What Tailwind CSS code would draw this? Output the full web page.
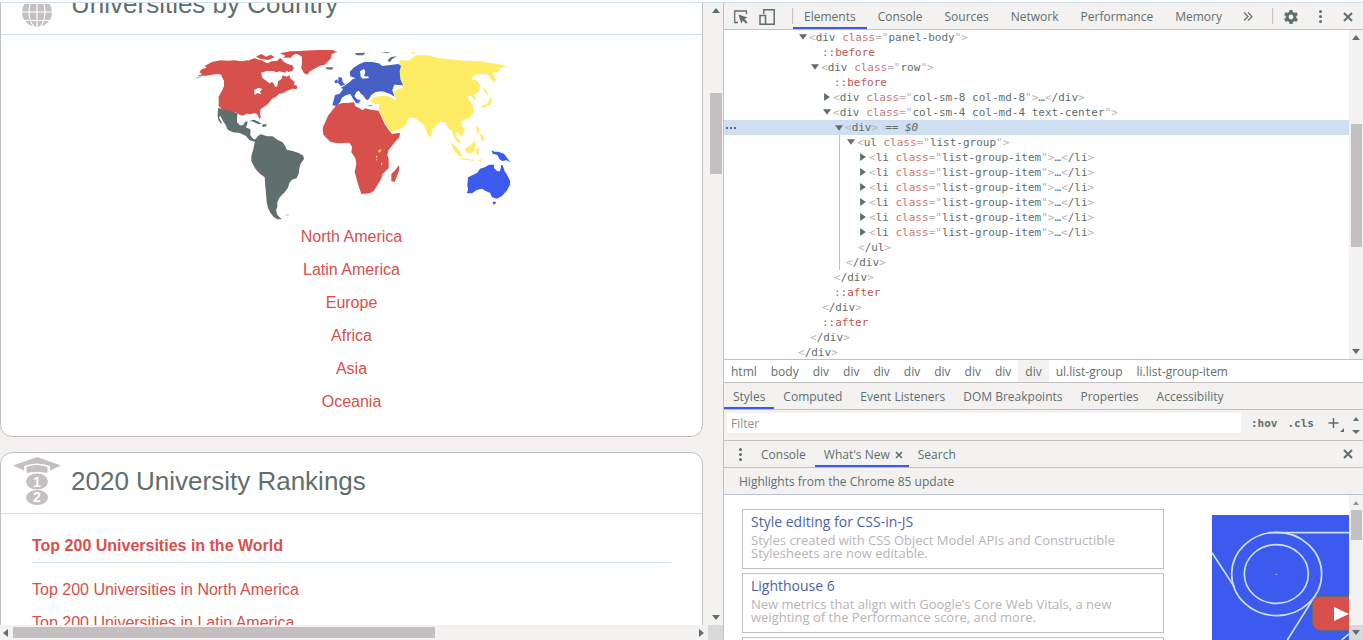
<!DOCTYPE html>
<html lang="en">
<head>
<meta charset="utf-8">
<title>Universities by Country</title>
<script src="https://cdn.jsdelivr.net/npm/@tailwindcss/browser@4"></script>
</head>
<body class="h-screen overflow-hidden bg-white text-[#5f6f6d]">
<div class="grid h-full grid-cols-[723fr_640fr] grid-rows-[minmax(0,1fr)] pt-[2px]">

  <!-- Page viewport -->
  <main class="flex min-w-0 flex-col border-t border-[#cddff1] bg-[#f3f2f1] font-['Liberation_Sans',Arial,sans-serif]">
    <div class="flex min-h-0 flex-1">
      <div class="min-w-0 flex-1 overflow-hidden pr-[5px]">
        <section class="-mt-[30px] rounded-xl border border-[#c4bfc1] bg-white pb-[18px]">
          <header class="flex h-[61px] items-center border-b border-[#cddff1] pl-5">
            <svg class="mt-4 size-8 shrink-0" viewBox="0 0 32 32" aria-hidden="true">
              <circle cx="16" cy="16" r="15" fill="#c4bfc1"/>
              <g fill="none" stroke="#fff" stroke-width="1.2"><path d="M16 0v32M0 16h32M3 7.500h26M3 24.500h26"/><ellipse cx="16" cy="16" rx="8" ry="15.500"/></g>
            </svg>
            <h2 class="mb-px ml-[18px] text-[26px] leading-8">Universities by Country</h2>
          </header>
          <svg class="mx-auto mt-[10px] h-[175px] w-[323px]" viewBox="30 15 969 525" role="img" aria-label="World map by region">
            <defs>
              <pattern id="hatch" width="9" height="9" patternUnits="userSpaceOnUse"><rect width="9" height="9" fill="#3d5aee"/><path d="M0 0l9 9M-2 7l4 4M7-2l4 4" stroke="#5f6f6d" stroke-width="2.800"/></pattern>
            </defs>
            <g fill="#d7504b">
              <path d="M52 108l14-6-8-5 8-10 14-4-6-5 22-12 26-5 20 1 22-1 20 3 18-3 14 6 16 2 18-4 14 5 10-6 18-2 8-8 8 6-4 12 12-4 6 6 16 2-2 12-14 2-6 8-18-4-12 4-16 4-8 10 4 12 14 4 6 14 6-4 2-14 10-6 4-12 12 4 8-4 4 10 12 10-2 8 10 4-2 10-14-2-14 6-14 8-12 2-10 10-10 4-12 16-14 10-8 6-2 12 2 14-4 3-6-14-8-4-12 4-12-2-12 6-8-2-12-8-18 0-16-6-10-4-8-9 0-28 10-18 6-14 0-16-6-10-2-8-12-2-16 2-18 3z"/>
              <path d="M204 62l20-8 14 6 14 2-4 8-24 4zM228 50l16-8 14 8 14-6 12 8-20 8-24-4zM300 40l30-6 36-1-10 6-16 6-8 8-22 0 6-6zM286 66l18-6 14 10 16 6 8 8-6 10-12 2-6-10-14-6zM310 138l22 0 4 10-18 0z"/>
              <path d="M340 37l26-5 50-2 42 0 14 6-16 6-4 14-18 18-16 4-14 8-14 8-8 10-10-4-8-16 2-16 0-18-10-6z"/>
            </g>
            <path d="M38 119l16-9 12-4-4 6zM464 35l8 3-8 2z" fill="#c4bfc1"/>
            <g fill="#fff"><path d="M222 151l14-8 10 4-6 8 4 8-12-4-8 6zM244 98l16-5 22 0 10 8-14 16-8 14-10-8-14-10z"/></g>
            <g fill="#5f6f6d">
              <path d="M114 204l14 4 18 3 27 9-2 14 0 12 8 10 10 0 6-10 8-2-2 12-4 6 14 6 0 18 8 10 10 4-6 5-14-4-12-14-18-8-20-2-16-8-6-14-8-12-8-16-4 6 8 14 0 6-10-12-2-14zM208 243l14-4 14 6 10 8-14-2-12-6zM246 254l12-2 2 6-12 4z"/>
              <path d="M226 298l8-10 8-5 20 6 16 0 14 10 16 8 8 12 4 10 18 4 18 6 14 8 2 10-10 14-4 14-2 16-6 14-14 4-8 10-4 14-10 14-12 12-6 8-4 10 0 14-4 10 4 14 10 10 4 3-14 0-10-6-10-12-8-16-4-18-2-24-2-24-2-26-16-12-12-14-12-22 0-16 6-20z"/>
              <path d="M316 522l10 0 0 6-8 0z" fill="#cddff1"/>
            </g>
            <g transform="translate(480)">
              <path fill="#d7504b" d="M-10 194l18-5 14 0 20-2 4 12 10 4 12 8 8-6 16 4 24 3 6 14 12 26 14 20 8 10 24-4-2 14-16 18-16 20-4 14 4 14 0 26-18 18-6 18-10 16-10 16-12 8-26 2-10-30-10-36 5-24-3-18-12-17 2-17-8-12-34 2-22-4-22-22-2-20 16-37zM176 376l2 12-6 18-8 20-10-2 0-22 14-14z"/>
              <path d="M122 327l-8 6 4 5 5-4z" fill="#ffec65"/>
              <path d="M110 347v6M110 357v4M125 368v8" stroke="#ffec65" stroke-width="3"/>
              <g fill="#ffec65">
                <path d="M180 60l24 2 12-8 14-8 36 0 26 8 40 4 42 4 40 2 36 4 22 4 28 7-20 6-4 10-18 4 10 20-4 8-12-10-8-14-20-2-20 4-10 14 16 2 10 14-2 18-12 10-6 2 8 12-4 4-10-12-12-2 8 16 10 14 2 20-12 16-18 8-10 4 4 12 8 12-2 12-10 8-8-12-6 0 2 14 8 10 4 10-12-6-10-18-4-14-12-10-8-16-14-2-16 14-10 10-2 22-8-2-10-22-6-14-14-10-10-8-22-2-4 18-14 14-22 8-12 4-12-22-14-24-10-18 2-20-18-2-8-10 6-8 16-4 22-2 16 4 10 8 8-2-12-16 12-12 20-6-6-10-10-4 2-16-4-14z"/>
                <path d="M430 140l6 8 8 14-2 4-10-14zM452 170l4 12-4 12-12 4-14 8 0-8 14-6 8-10zM408 258l8 6 2 16-6-2zM420 280l10 8 2 18-8-6zM376 325l14-8 14-14 2 12-4 20-10 6-14-4zM332 308l14 10 14 16 8 18-12-4-14-18zM360 353l24 4 18 2 0 3-40-4zM408 328l8-4 0 22-6-4zM412 360l20-2-10 6zM210 38l12-2 10 4-14 1z"/>
              </g>
              <g fill="url(#hatch)">
                <path d="M-15 165l14-4 10-14-6-4 14-8 8-6 14-12 8-2-16-6-2-14 12-12 16-10 16-7 24 0 20 4 10 8 18-2 30-4 8 6-4 14 2 26 8 18-26-2-6 16 6 20-12-8-24-8-20 2-14 10-6 12-8 2-10-14-8-6-4-8-8 4-6 12 10 12 6 10-10 0-10-14-8-14-14 4-12 8-4 12-12 12-12-2zM-4 110l10 4 2 12 8 8-14 4-8-10zM-16 122l8-4 2 10-10 2z"/>
              </g>
              <path d="M60 94l12-8 4 10-4 12 14 2 0 4-18 2-6-6z" fill="#fff"/>
              <g fill="#5f6f6d"><path d="M-44 82l24 0-4 7-16-1zM44 40l32-2-6 8-20 0zM142 62l10-10 18-4-14 10-6 8zM120 37l28 0-4 3zM50 178l12 2-2 6-10-4zM84 194l16 3-10 2z"/></g>
              <g fill="#3d5aee">
                <path d="M384 412l16-8 12-6 8-12 14-4 14-8 14 0 0 10 10 10 8 0 4-20 4 2 6 18 8 12 8 16 0 12-10 18-14 16-16 8-14-4-6-14-12-4-12-8-16 4-14 10-16 0 4-10-2-14zM454 331l10 4 10 0 18 6 10 14 10 12-12-6-14 2-8-6-6-12-14-4zM458 485l10 0-2 6-6 3z"/>
              </g>
            </g>
          </svg>
          <ul class="text-center text-base leading-[33px] text-[#d7504b]">
            <li><a href="#">North America</a></li>
            <li><a href="#">Latin America</a></li>
            <li><a href="#">Europe</a></li>
            <li><a href="#">Africa</a></li>
            <li><a href="#">Asia</a></li>
            <li><a href="#">Oceania</a></li>
          </ul>
        </section>

        <section class="mt-[15px] rounded-xl border border-[#c4bfc1] bg-white pb-8">
          <header class="flex h-[61px] items-center border-b border-[#cddff1] pl-3">
            <svg class="mb-1 h-12 w-12 shrink-0" viewBox="0 0 48 48" aria-hidden="true">
              <g fill="#c4bfc1"><path d="M24 0L0 8.500l11 5V9q13-5 26 0v4.500l11-5z"/><path d="M13.500 10q10.500-4 21 0v6q-10.500-2-21 0z"/><ellipse cx="24" cy="24.500" rx="11" ry="8"/><ellipse cx="24" cy="40.500" rx="11" ry="7.500"/></g>
              <g fill="#fff" font-family="Liberation Sans, Arial, sans-serif" font-weight="bold" font-size="14" text-anchor="middle"><text x="24" y="30">1</text><text x="24" y="45">2</text></g>
            </svg>
            <h2 class="mb-1 ml-[10px] text-[26px] leading-8">2020 University Rankings</h2>
          </header>
          <div class="px-[31px] pt-[15px] text-base leading-[33px] text-[#d7504b]">
            <p class="border-b border-[#cddff1] font-bold"><a href="#">Top 200 Universities in the World</a></p>
            <ul class="pt-[10px]">
              <li><a href="#">Top 200 Universities in North America</a></li>
              <li><a href="#">Top 200 Universities in Latin America</a></li>
            </ul>
          </div>
        </section>
      </div>
      <div class="flex w-[15px] shrink-0 flex-col items-center justify-between py-[5px]" aria-hidden="true">
        <svg class="h-[5px] w-2" viewBox="0 0 8 5"><path d="M4 0l4 5H0z" fill="#5f6f6d"/></svg>
        <div class="w-full flex-1 pt-[80px] pr-px pl-[2px]"><div class="h-[81px] bg-[#c4bfc1]"></div></div>
        <svg class="h-[5px] w-2" viewBox="0 0 8 5"><path d="M0 0h8L4 5z" fill="#5f6f6d"/></svg>
      </div>
    </div>
    <div class="flex h-[15px] shrink-0 items-center" aria-hidden="true">
      <svg class="ml-[3px] h-2 w-[5px]" viewBox="0 0 5 8"><path d="M5 0v8L0 4z" fill="#5f6f6d"/></svg>
      <div class="flex-1 px-[5px]"><div class="h-[11px] w-[62%] bg-[#c4bfc1]"></div></div>
      <svg class="mr-1 h-2 w-[5px]" viewBox="0 0 5 8"><path d="M0 0v8l5-4z" fill="#5f6f6d"/></svg>
      <div class="h-full w-[15px] bg-[#d9d9dc]"></div>
    </div>
  </main>

  <!-- Developer tools -->
  <aside class="flex min-w-0 flex-col border-t border-l border-t-[#cddff1] border-l-[#c4bfc1] bg-[#f3f2f1] font-['Open_Sans',sans-serif] text-xs">
    <nav class="flex h-[27px] shrink-0 items-center border-b border-[#c4bfc1] [&>button]:pt-px">
      <button class="ml-[10px]" aria-label="Inspect element"><svg class="size-[14px]" viewBox="0 0 14 14"><path d="M12.500 4V1H.7v11.500H4" fill="none" stroke="#5f6f6d" stroke-width="1.300"/><path d="M4.500 4.500l9 3-3 1.600 3 3.200-1.400 1.400-3.200-3.200-1.600 3z" fill="#5f6f6d"/></svg></button>
      <button class="ml-[11px]" aria-label="Toggle device toolbar"><svg class="size-4" viewBox="0 0 16 16"><path d="M4.800 5V.8h10.400v14.400H7M1 6.500h5.500v8.700H1z" fill="none" stroke="#5f6f6d" stroke-width="1.500"/></svg></button>
      <span class="ml-[17px] h-4 w-px bg-[#c4bfc1]"></span>
      <button class="h-full border-y-2 border-t-transparent border-b-[#3d5aee] px-[11px]">Elements</button>
      <button class="px-[11px]">Console</button>
      <button class="px-[11px]">Sources</button>
      <button class="px-[11px]">Network</button>
      <button class="px-[11px]">Performance</button>
      <button class="px-[11px]">Memory</button>
      <button class="ml-[10px]" aria-label="More tabs"><svg class="h-[9px] w-[10px]" viewBox="0 0 10 9"><path d="M1 .5l4 4-4 4M5 .5l4 4-4 4" fill="none" stroke="#5f6f6d" stroke-width="1.200"/></svg></button>
      <span class="mr-[11px] ml-auto h-4 w-px bg-[#c4bfc1]"></span>
      <button class="mr-[21px]" aria-label="Settings"><svg class="size-[14px]" viewBox="0 0 14 14"><circle cx="7" cy="7" r="3.900" fill="none" stroke="#5f6f6d" stroke-width="3"/><path d="M7 0v3M7 11v3M.9 3.500l2.600 1.500M10.500 9l2.600 1.500M.9 10.500L3.500 9M10.500 5l2.600-1.500" stroke="#5f6f6d" stroke-width="3.200"/></svg></button>
      <button class="mr-[21px]" aria-label="Customize"><svg class="h-[13px] w-[3px]" viewBox="0 0 3 13" fill="#5f6f6d"><circle cx="1.500" cy="1.500" r="1.500"/><circle cx="1.500" cy="6.500" r="1.500"/><circle cx="1.500" cy="11.500" r="1.500"/></svg></button>
      <button class="mr-[10px]" aria-label="Close"><svg class="size-[10px]" viewBox="0 0 10 10"><path d="M1 1l8 8M9 1L1 9" stroke="#5f6f6d" stroke-width="2"/></svg></button>
    </nav>

    <div class="flex h-[329px] shrink-0 bg-white">
      <div class="min-w-0 flex-1 overflow-hidden font-['DejaVu_Sans_Mono',monospace] text-[11px] leading-[15px] whitespace-nowrap [&_b]:font-normal [&_b]:text-[#b9b3b6] [&_em]:text-[#c2554f] [&_em]:not-italic [&_i]:inline-block [&_i]:w-3 [&_i]:pl-[2px] [&_i>svg]:size-2">
        <div class="pl-[73px]"><i><svg viewBox="0 0 7 7"><path d="M0 1h7L3.500 6z" fill="#5f6f6d"/></svg></i><b>&lt;</b>div <em class="opacity-80">class</em><b>="</b>panel-body<b>"&gt;</b></div>
        <div class="pl-[98px]"><em>::before</em></div>
        <div class="pl-[85px]"><i><svg viewBox="0 0 7 7"><path d="M0 1h7L3.500 6z" fill="#5f6f6d"/></svg></i><b>&lt;</b>div <em class="opacity-80">class</em><b>="</b>row<b>"&gt;</b></div>
        <div class="pl-[110px]"><em>::before</em></div>
        <div class="pl-[97px]"><i><svg viewBox="0 0 7 7"><path d="M1 0v7l5-3.500z" fill="#5f6f6d"/></svg></i><b>&lt;</b>div <em class="opacity-80">class</em><b>="</b>col-sm-8 col-md-8<b>"&gt;</b>…<b>&lt;</b>/div<b>&gt;</b></div>
        <div class="pl-[97px]"><i><svg viewBox="0 0 7 7"><path d="M0 1h7L3.500 6z" fill="#5f6f6d"/></svg></i><b>&lt;</b>div <em class="opacity-80">class</em><b>="</b>col-sm-4 col-md-4 text-center<b>"&gt;</b></div>
        <div class="flex items-center bg-[#cddff1]"><span class="flex w-[109px] items-center gap-[2px] pl-[2px]"><span class="size-[2px] bg-[#5f6f6d]"></span><span class="size-[2px] bg-[#5f6f6d]"></span><span class="size-[2px] bg-[#5f6f6d]"></span></span><i><svg viewBox="0 0 7 7"><path d="M0 1h7L3.500 6z" fill="#5f6f6d"/></svg></i><b>&lt;</b>div<b>&gt;</b><span class="pl-[7px]">== <span class="italic">$0</span></span></div>
        <div class="ml-[115px] border-l border-[#c4bfc1]">
          <div class="pl-[5px]"><i><svg viewBox="0 0 7 7"><path d="M0 1h7L3.500 6z" fill="#5f6f6d"/></svg></i><b>&lt;</b>ul <em class="opacity-80">class</em><b>="</b>list-group<b>"&gt;</b></div>
          <div class="pl-[17px]"><i><svg viewBox="0 0 7 7"><path d="M1 0v7l5-3.500z" fill="#5f6f6d"/></svg></i><b>&lt;</b>li <em class="opacity-80">class</em><b>="</b>list-group-item<b>"&gt;</b>…<b>&lt;</b>/li<b>&gt;</b></div>
          <div class="pl-[17px]"><i><svg viewBox="0 0 7 7"><path d="M1 0v7l5-3.500z" fill="#5f6f6d"/></svg></i><b>&lt;</b>li <em class="opacity-80">class</em><b>="</b>list-group-item<b>"&gt;</b>…<b>&lt;</b>/li<b>&gt;</b></div>
          <div class="pl-[17px]"><i><svg viewBox="0 0 7 7"><path d="M1 0v7l5-3.500z" fill="#5f6f6d"/></svg></i><b>&lt;</b>li <em class="opacity-80">class</em><b>="</b>list-group-item<b>"&gt;</b>…<b>&lt;</b>/li<b>&gt;</b></div>
          <div class="pl-[17px]"><i><svg viewBox="0 0 7 7"><path d="M1 0v7l5-3.500z" fill="#5f6f6d"/></svg></i><b>&lt;</b>li <em class="opacity-80">class</em><b>="</b>list-group-item<b>"&gt;</b>…<b>&lt;</b>/li<b>&gt;</b></div>
          <div class="pl-[17px]"><i><svg viewBox="0 0 7 7"><path d="M1 0v7l5-3.500z" fill="#5f6f6d"/></svg></i><b>&lt;</b>li <em class="opacity-80">class</em><b>="</b>list-group-item<b>"&gt;</b>…<b>&lt;</b>/li<b>&gt;</b></div>
          <div class="pl-[17px]"><i><svg viewBox="0 0 7 7"><path d="M1 0v7l5-3.500z" fill="#5f6f6d"/></svg></i><b>&lt;</b>li <em class="opacity-80">class</em><b>="</b>list-group-item<b>"&gt;</b>…<b>&lt;</b>/li<b>&gt;</b></div>
          <div class="pl-[18px]"><b>&lt;</b>/ul<b>&gt;</b></div>
          <div class="pl-[6px]"><b>&lt;</b>/div<b>&gt;</b></div>
        </div>
        <div class="pl-[110px]"><b>&lt;</b>/div<b>&gt;</b></div>
        <div class="pl-[110px]"><em>::after</em></div>
        <div class="pl-[98px]"><b>&lt;</b>/div<b>&gt;</b></div>
        <div class="pl-[98px]"><em>::after</em></div>
        <div class="pl-[86px]"><b>&lt;</b>/div<b>&gt;</b></div>
        <div class="pl-[74px]"><b>&lt;</b>/div<b>&gt;</b></div>
      </div>
      <div class="flex w-[14px] shrink-0 flex-col items-center bg-[#f3f2f1] py-[5px]" aria-hidden="true">
        <svg class="h-[5px] w-2" viewBox="0 0 8 5"><path d="M4 0l4 5H0z" fill="#5f6f6d"/></svg>
        <div class="w-full flex-1 pt-[84px] pr-px pl-[2px]"><div class="h-[123px] bg-[#c4bfc1]"></div></div>
        <svg class="h-[5px] w-2" viewBox="0 0 8 5"><path d="M0 0h8L4 5z" fill="#5f6f6d"/></svg>
      </div>
    </div>

    <nav class="flex h-6 shrink-0 items-stretch border-y border-[#c4bfc1] bg-white leading-[24px] [&>a]:px-[7px]" aria-label="Element path">
      <a href="#">html</a><a href="#">body</a><a href="#">div</a><a href="#">div</a><a href="#">div</a><a href="#">div</a><a href="#">div</a><a href="#">div</a><a href="#">div</a><a href="#" class="bg-[#f3f2f1]">div</a><a href="#">ul.list-group</a><a href="#">li.list-group-item</a>
    </nav>

    <nav class="flex h-[27px] shrink-0 items-stretch border-b border-[#c4bfc1] [&>button]:px-[9px] [&>button]:pt-[2px]">
      <button class="border-y-2 border-t-transparent border-b-[#3d5aee]">Styles</button><button>Computed</button><button>Event Listeners</button><button>DOM Breakpoints</button><button>Properties</button><button>Accessibility</button>
    </nav>

    <div class="flex h-[31px] shrink-0 items-center border-b border-[#c4bfc1] font-['DejaVu_Sans_Mono',monospace] text-[11px] font-bold">
      <input type="text" aria-label="Filter" placeholder="Filter" class="mb-1 ml-[3px] h-5 min-w-0 flex-1 bg-white px-1 font-['Open_Sans',sans-serif] text-xs font-normal placeholder:text-[#8b9190]">
      <button class="mb-[2px] ml-[10px]">:hov</button>
      <button class="mb-[2px] ml-[10px]">.cls</button>
      <button class="ml-[14px]" aria-label="New style rule"><svg class="h-[18px] w-[17px]" viewBox="0 0 17 18"><path d="M5.500 2v10M.5 7h10" stroke="#5f6f6d" stroke-width="1.500"/><path d="M16 12v4h-4z" fill="#5f6f6d"/></svg></button>
      <svg class="mr-[3px] ml-[7px] h-[18px] w-2" viewBox="0 0 8 18" aria-hidden="true"><path d="M4 1l3 4H1zM0 14h8l-4 4z" fill="#5f6f6d"/></svg>
    </div>

    <nav class="flex h-[27px] shrink-0 items-center border-b border-[#c4bfc1]">
      <button class="mr-[10px] ml-[15px]" aria-label="More tools"><svg class="h-[13px] w-[3px]" viewBox="0 0 3 13" fill="#5f6f6d"><circle cx="1.500" cy="1.500" r="1.500"/><circle cx="1.500" cy="6.500" r="1.500"/><circle cx="1.500" cy="11.500" r="1.500"/></svg></button>
      <button class="px-[9px] pt-px">Console</button>
      <button class="flex h-full items-center gap-[5px] border-y-2 border-t-transparent border-b-[#3d5aee] pt-px pr-[6px] pl-[9px]">What's New <svg class="size-2" viewBox="0 0 8 8"><path d="M1 1l6 6M7 1L1 7" stroke="#5f6f6d" stroke-width="1.600"/></svg></button>
      <button class="px-[9px] pt-px">Search</button>
      <button class="mr-[10px] ml-auto" aria-label="Close drawer"><svg class="size-[10px]" viewBox="0 0 10 10"><path d="M1 1l8 8M9 1L1 9" stroke="#5f6f6d" stroke-width="2"/></svg></button>
    </nav>
    <p class="h-[27px] shrink-0 border-b border-[#b9c4d8] pl-[15px] leading-[27px]">Highlights from the Chrome 85 update</p>

    <div class="flex min-h-0 flex-1 bg-white">
      <div class="flex min-w-0 flex-1 justify-between overflow-hidden pl-[18px]">
        <div class="mt-[14px] flex w-[422px] shrink-0 flex-col gap-1 text-[13px] leading-[13px] text-[#b9b3b6]">
          <article class="h-[60px] shrink-0 border border-[#c4bfc1] px-2 pt-[3px]"><h3 class="mb-[3px] text-sm leading-[18px] text-[#4a64a8]"><a href="#">Style editing for CSS-in-JS</a></h3><p>Styles created with CSS Object Model APIs and Constructible Stylesheets are now editable.</p></article>
          <article class="h-[60px] shrink-0 border border-[#c4bfc1] px-2 pt-[3px]"><h3 class="mb-[3px] text-sm leading-[18px] text-[#4a64a8]"><a href="#">Lighthouse 6</a></h3><p>New metrics that align with Google’s Core Web Vitals, a new weighting of the Performance score, and more.</p></article>
          <article class="h-[60px] shrink-0 border border-[#c4bfc1]"></article>
        </div>
        <svg class="mt-5 h-[125px] w-[137px] shrink-0" viewBox="576 105 411 375" role="img" aria-label="Video preview">
          <path fill="#3d5aee" d="M576 105h411v375H576z"/>
          <g fill="none" stroke="#cddff1" stroke-width="5"><ellipse cx="770" cy="282" rx="135" ry="125"/><ellipse cx="769" cy="282" rx="96" ry="88"/><path d="M576 218l68 104M745 158h242M802 480l84-134M965 480l22-18"/></g>
          <circle cx="769" cy="283" r="2" fill="#cddff1"/>
          <rect x="877" y="349" width="150" height="102" rx="24" fill="#d7504b" stroke="#5f6f6d" stroke-width="3"/>
          <path d="M942 381l45 21-45 21z" fill="#fff"/>
        </svg>
      </div>
      <div class="flex w-[14px] shrink-0 flex-col items-center bg-[#f3f2f1] pt-[6px]" aria-hidden="true">
        <svg class="h-1 w-[6px]" viewBox="0 0 8 5"><path d="M4 0l4 5H0z" fill="#8b9190"/></svg>
        <div class="w-full flex-1 pt-[5px] pr-px pl-[2px]"><div class="h-[30px] bg-[#c4bfc1]"></div></div>
        <div class="flex h-[15px] w-full items-center justify-center bg-[#d9d9dc]"><svg class="h-[5px] w-2" viewBox="0 0 8 5"><path d="M0 0h8L4 5z" fill="#5f6f6d"/></svg></div>
      </div>
    </div>
  </aside>
</div>
</body>
</html>
